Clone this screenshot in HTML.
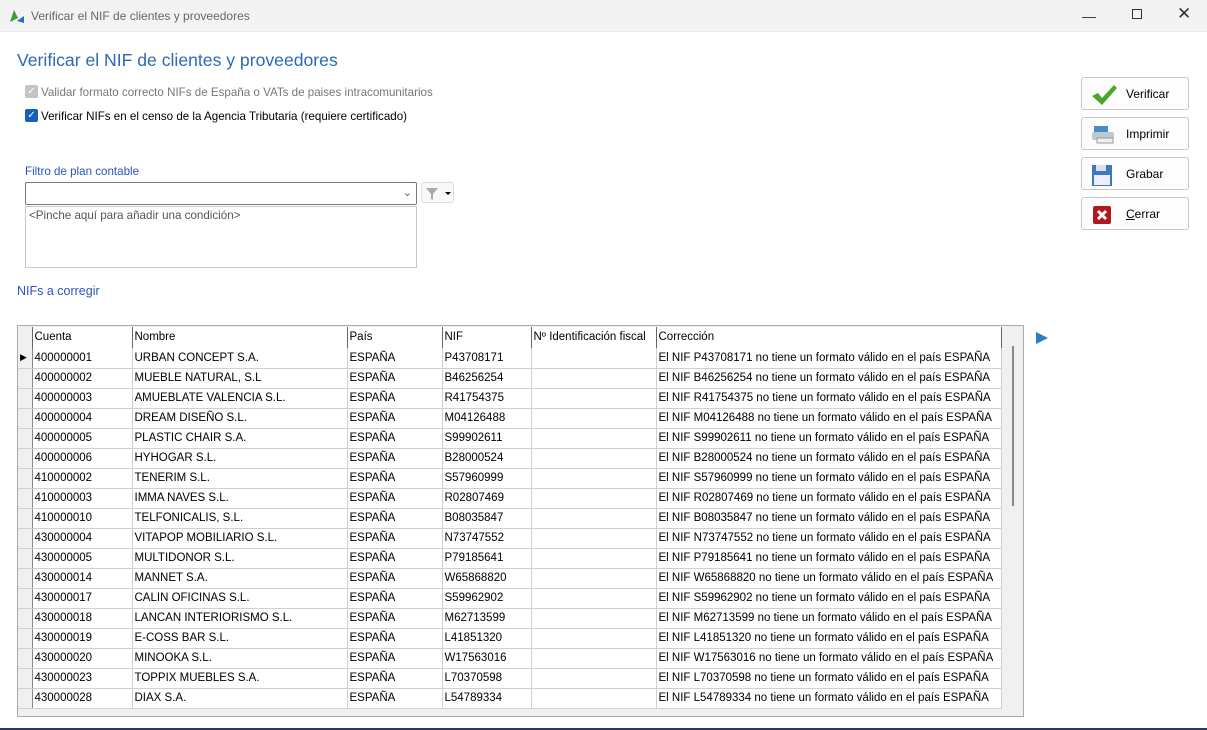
<!DOCTYPE html>
<html><head><meta charset="utf-8"><style>
*{margin:0;padding:0;box-sizing:border-box}
body{width:1207px;height:730px;background:#fff;font-family:"Liberation Sans",sans-serif;font-size:11.6px;position:relative;overflow:hidden;color:#000}
.abs{position:absolute}
.title{left:0;top:0;width:1207px;height:32px;background:#f3f3f3;border-bottom:1px solid #e8e8e8}
.btn{position:absolute;left:1081px;width:108px;height:33px;border:1px solid #c9c9c9;border-radius:3px;background:#fdfdfd;font-size:12px}
.btn span{position:absolute;left:44px;top:9px}
.btn svg{position:absolute;left:8px;top:5px}
table{border-collapse:collapse;table-layout:fixed;font-size:11.5px}
td{height:20px;border-right:1px solid #d0d0d0;border-bottom:1px solid #d0d0d0;padding:0 2px;white-space:nowrap;overflow:hidden}
td.rh{background:#f0f0f0;border-right:1px solid #888;padding:0}
th{height:21px;font-weight:normal;text-align:left;padding:0 2px;border-right:1px solid #666;border-bottom:1px solid #666;background:#fff;white-space:nowrap;overflow:hidden}
</style></head><body>
<div class="abs title"></div>
<svg class="abs" style="left:9px;top:8px" width="16" height="16"><path d="M1 14 L5 2 L9 10 Z" fill="#3d9b3a"/><path d="M15 8 L8 13 L15 15Z" fill="#2a6fb5"/></svg>
<div class="abs" style="left:31px;top:9px;font-size:12px;color:#666">Verificar el NIF de clientes y proveedores</div>
<div class="abs" style="left:1082px;top:8px;font-size:14px;color:#333">&#8212;</div>
<div class="abs" style="left:1132px;top:9px;width:10px;height:10px;border:1px solid #333"></div>
<div class="abs" style="left:1177px;top:4px;font-size:17px;color:#333">&#10005;</div>
<div class="abs" style="left:17px;top:50px;font-size:17.6px;color:#2a6ab8">Verificar el NIF de clientes y proveedores</div>
<div class="abs" style="left:25px;top:85px;width:13px;height:13px;background:#c5c5c5;border-radius:2px;color:#fff;font-size:10px;text-align:center;line-height:13px">&#10003;</div>
<div class="abs" style="left:41px;top:86px;color:#777">Validar formato correcto NIFs de España o VATs de paises intracomunitarios</div>
<div class="abs" style="left:25px;top:109px;width:13px;height:13px;background:#1560bd;border-radius:2px;color:#fff;font-size:10px;text-align:center;line-height:13px">&#10003;</div>
<div class="abs" style="left:41px;top:110px">Verificar NIFs en el censo de la Agencia Tributaria (requiere certificado)</div>
<div class="abs" style="left:25px;top:165px;color:#2a55c0">Filtro de plan contable</div>
<div class="abs" style="left:25px;top:182px;width:392px;height:23px;border:1px solid #7a7a7a;border-radius:2px"><span style="position:absolute;right:4px;top:3px;color:#666;font-size:11px">&#8964;</span></div>
<div class="abs" style="left:421px;top:182px;width:33px;height:21px;border:1px solid #ddd;border-radius:3px;background:#f8f8f8"><svg width="33" height="21"><path d="M4 5 H16 L11 11 V17 L9 16 V11 Z" fill="#aaa"/><path d="M23 9 H29 L26 12Z" fill="#000"/></svg></div>
<div class="abs" style="left:25px;top:206px;width:392px;height:62px;border:1px solid #c8c8c8;padding:2px 3px;color:#555">&lt;Pinche aquí para añadir una condición&gt;</div>
<div class="abs" style="left:17px;top:284px;font-size:12.5px;color:#2a55c0">NIFs a corregir</div>
<div class="btn" style="top:77px"><svg width="28" height="24"><path d="M2 13 L8 10 L12 15 L24 2 L27 5 L12 22 Z" fill="#4ea626"/></svg><span>Verificar</span></div>
<div class="btn" style="top:117px"><svg width="28" height="24"><rect x="4" y="3" width="14" height="8" fill="#4a8ac9"/><rect x="2" y="9" width="22" height="8" rx="2" fill="#c0c8d0"/><rect x="7" y="15" width="16" height="5" fill="#eee" stroke="#999"/></svg><span>Imprimir</span></div>
<div class="btn" style="top:157px"><svg width="28" height="24"><rect x="2" y="2" width="20" height="21" fill="#3a78c0"/><rect x="6" y="2" width="10" height="6" fill="#dde"/><rect x="4" y="12" width="16" height="10" fill="#eef"/></svg><span>Grabar</span></div>
<div class="btn" style="top:197px"><svg width="28" height="24"><rect x="3" y="3" width="18" height="18" rx="2" fill="#b0181b"/><path d="M8 8 L16 16 M16 8 L8 16" stroke="#fff" stroke-width="3"/></svg><span><u>C</u>errar</span></div>
<div class="abs" style="left:17px;top:325px;width:1007px;height:392px;border:1px solid #aaa;background:#f0f0f0;overflow:hidden">
<table style="position:absolute;left:0;top:1px;width:983px">
<colgroup><col style="width:14px"><col style="width:100px"><col style="width:215px"><col style="width:95px"><col style="width:89px"><col style="width:125px"><col style="width:345px"></colgroup>
<tr><th style="background:#f0f0f0"></th><th>Cuenta</th><th>Nombre</th><th>País</th><th>NIF</th><th>Nº Identificación fiscal</th><th>Corrección</th></tr>
</table>
<div style="position:absolute;left:994px;top:20px;width:2px;height:160px;background:#888"></div>
<table id="t" style="position:absolute;left:0;top:22px;width:983px;background:#fff">
<colgroup><col style="width:14px"><col style="width:100px"><col style="width:215px"><col style="width:95px"><col style="width:89px"><col style="width:125px"><col style="width:345px"></colgroup>
<tr><td class="rh" style="font-size:9px;padding-left:2px">&#9654;</td><td>400000001</td><td>URBAN CONCEPT S.A.</td><td>ESPAÑA</td><td>P43708171</td><td></td><td>El NIF P43708171 no tiene un formato válido en el país ESPAÑA</td></tr>
<tr><td class="rh"></td><td>400000002</td><td>MUEBLE NATURAL, S.L</td><td>ESPAÑA</td><td>B46256254</td><td></td><td>El NIF B46256254 no tiene un formato válido en el país ESPAÑA</td></tr>
<tr><td class="rh"></td><td>400000003</td><td>AMUEBLATE VALENCIA S.L.</td><td>ESPAÑA</td><td>R41754375</td><td></td><td>El NIF R41754375 no tiene un formato válido en el país ESPAÑA</td></tr>
<tr><td class="rh"></td><td>400000004</td><td>DREAM DISEÑO S.L.</td><td>ESPAÑA</td><td>M04126488</td><td></td><td>El NIF M04126488 no tiene un formato válido en el país ESPAÑA</td></tr>
<tr><td class="rh"></td><td>400000005</td><td>PLASTIC CHAIR S.A.</td><td>ESPAÑA</td><td>S99902611</td><td></td><td>El NIF S99902611 no tiene un formato válido en el país ESPAÑA</td></tr>
<tr><td class="rh"></td><td>400000006</td><td>HYHOGAR S.L.</td><td>ESPAÑA</td><td>B28000524</td><td></td><td>El NIF B28000524 no tiene un formato válido en el país ESPAÑA</td></tr>
<tr><td class="rh"></td><td>410000002</td><td>TENERIM S.L.</td><td>ESPAÑA</td><td>S57960999</td><td></td><td>El NIF S57960999 no tiene un formato válido en el país ESPAÑA</td></tr>
<tr><td class="rh"></td><td>410000003</td><td>IMMA NAVES S.L.</td><td>ESPAÑA</td><td>R02807469</td><td></td><td>El NIF R02807469 no tiene un formato válido en el país ESPAÑA</td></tr>
<tr><td class="rh"></td><td>410000010</td><td>TELFONICALIS, S.L.</td><td>ESPAÑA</td><td>B08035847</td><td></td><td>El NIF B08035847 no tiene un formato válido en el país ESPAÑA</td></tr>
<tr><td class="rh"></td><td>430000004</td><td>VITAPOP MOBILIARIO S.L.</td><td>ESPAÑA</td><td>N73747552</td><td></td><td>El NIF N73747552 no tiene un formato válido en el país ESPAÑA</td></tr>
<tr><td class="rh"></td><td>430000005</td><td>MULTIDONOR S.L.</td><td>ESPAÑA</td><td>P79185641</td><td></td><td>El NIF P79185641 no tiene un formato válido en el país ESPAÑA</td></tr>
<tr><td class="rh"></td><td>430000014</td><td>MANNET S.A.</td><td>ESPAÑA</td><td>W65868820</td><td></td><td>El NIF W65868820 no tiene un formato válido en el país ESPAÑA</td></tr>
<tr><td class="rh"></td><td>430000017</td><td>CALIN OFICINAS S.L.</td><td>ESPAÑA</td><td>S59962902</td><td></td><td>El NIF S59962902 no tiene un formato válido en el país ESPAÑA</td></tr>
<tr><td class="rh"></td><td>430000018</td><td>LANCAN INTERIORISMO S.L.</td><td>ESPAÑA</td><td>M62713599</td><td></td><td>El NIF M62713599 no tiene un formato válido en el país ESPAÑA</td></tr>
<tr><td class="rh"></td><td>430000019</td><td>E-COSS BAR S.L.</td><td>ESPAÑA</td><td>L41851320</td><td></td><td>El NIF L41851320 no tiene un formato válido en el país ESPAÑA</td></tr>
<tr><td class="rh"></td><td>430000020</td><td>MINOOKA S.L.</td><td>ESPAÑA</td><td>W17563016</td><td></td><td>El NIF W17563016 no tiene un formato válido en el país ESPAÑA</td></tr>
<tr><td class="rh"></td><td>430000023</td><td>TOPPIX  MUEBLES S.A.</td><td>ESPAÑA</td><td>L70370598</td><td></td><td>El NIF L70370598 no tiene un formato válido en el país ESPAÑA</td></tr>
<tr><td class="rh"></td><td>430000028</td><td>DIAX S.A.</td><td>ESPAÑA</td><td>L54789334</td><td></td><td>El NIF L54789334 no tiene un formato válido en el país ESPAÑA</td></tr>
</table>
</div>
<svg class="abs" style="left:1035px;top:331px" width="14" height="14"><path d="M1 1 L13 7 L1 13Z" fill="#2a7fc0"/></svg>
<div class="abs" style="left:0;top:728px;width:1207px;height:2px;background:#2b3a5a"></div>
</body></html>
